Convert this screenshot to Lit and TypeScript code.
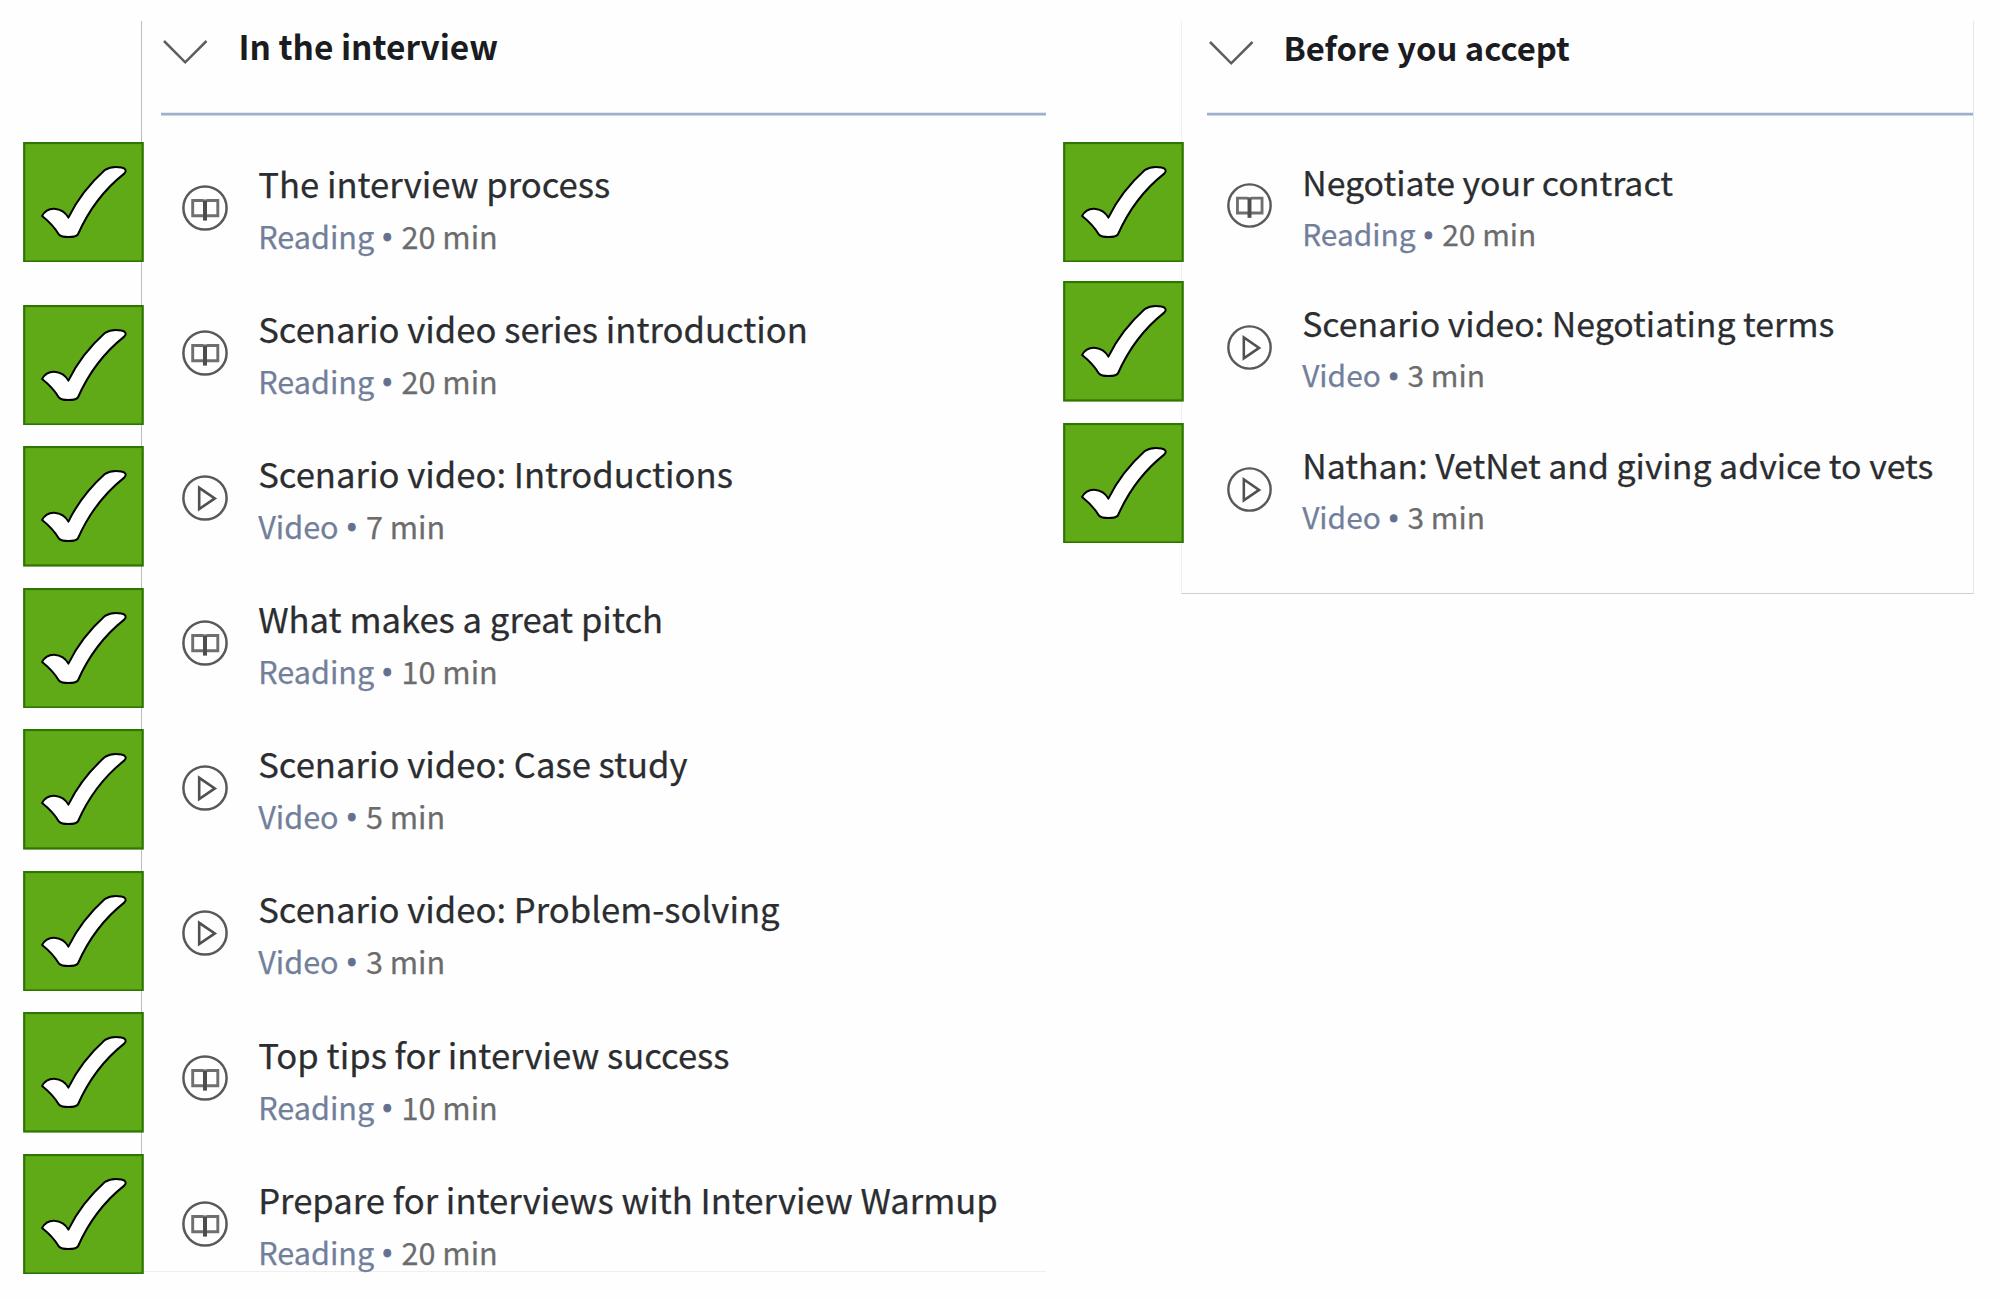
import { LitElement, html, svg, css } from "lit";
import { customElement, property } from "lit/decorators.js";
import { classMap } from "lit/directives/class-map.js";

type Kind = "Reading" | "Video";
interface Item {
  title: string;
  kind: Kind;
  minutes: number;
}

const INTERVIEW: Item[] = [
  { title: "The interview process", kind: "Reading", minutes: 20 },
  { title: "Scenario video series introduction", kind: "Reading", minutes: 20 },
  { title: "Scenario video: Introductions", kind: "Video", minutes: 7 },
  { title: "What makes a great pitch", kind: "Reading", minutes: 10 },
  { title: "Scenario video: Case study", kind: "Video", minutes: 5 },
  { title: "Scenario video: Problem-solving", kind: "Video", minutes: 3 },
  { title: "Top tips for interview success", kind: "Reading", minutes: 10 },
  { title: "Prepare for interviews with Interview Warmup", kind: "Reading", minutes: 20 },
];

const ACCEPT: Item[] = [
  { title: "Negotiate your contract", kind: "Reading", minutes: 20 },
  { title: "Scenario video: Negotiating terms", kind: "Video", minutes: 3 },
  { title: "Nathan: VetNet and giving advice to vets", kind: "Video", minutes: 3 },
];

@customElement("done-badge")
export class DoneBadge extends LitElement {
  static styles = css`
    :host {
      display: block;
      width: 120.5px;
      height: 120.5px;
    }
    svg {
      display: block;
      width: 100%;
      height: 100%;
    }
  `;
  render() {
    return html`<svg viewBox="0 0 120.5 120.5">
      <rect x="1.2" y="1" width="118.5" height="118.5" fill="#60a917" stroke="#2d7600" stroke-width="2.2" />
      <path
        transform="translate(0.9 0.3)"
        d="M18.2 73.700C21 68.200 25 66.300 30.200 66.400C37 67 42 70.500 44.500 75.300C53 58 65 42 81.200 27.500C86 24.500 92 24.200 97.500 25.200C102 26 103 28.500 100.300 31.300C80.500 47 65.500 66 54 92.200C51 95.600 38.200 95.600 35 92.200C31 85.500 25.500 79.500 18.200 73.700Z"
        fill="#fff" stroke="#000" stroke-width="2" stroke-linejoin="round"
      />
    </svg>`;
  }
}

@customElement("course-section")
export class CourseSection extends LitElement {
  @property() heading = "";
  @property({ type: Array }) items: Item[] = [];
  @property({ type: Boolean }) compact = false;

  static styles = css`
    .section {
      --title: 34.65px;
      --title-line: 52px;
      --meta: 30.6px;
      --meta-line: 46px;
      --meta-gap: 4px;
      --row: 145.15px;
      --icon: 48px;
      --icon-top: 48.6px;
      display: flex;
      align-items: flex-start;
      color: #1a1c1f;
      font-family: "Noto Sans CJK SC", "Noto Sans", sans-serif;
    }
    .section.compact {
      --title: 33.85px;
      --title-line: 50px;
      --meta: 29.9px;
      --meta-line: 44px;
      --meta-gap: 3.9px;
      --row: 141.8px;
      --icon: 47px;
      --icon-top: 47.3px;
    }
    .badges {
      display: flex;
      flex-direction: column;
      gap: 21px;
      padding-top: 120.7px;
      position: relative;
      z-index: 1;
    }
    .section:not(.compact) done-badge:first-child {
      margin-bottom: 21.5px;
    }
    .compact done-badge:first-child {
      margin-bottom: -2px;
    }
    .panel {
      box-sizing: border-box;
      width: 905px;
      height: 1251px;
      margin-left: -2.5px;
      padding-left: 19px;
      border-left: 1px solid #bdbdbd;
      border-bottom: 1px solid #efefef;
    }
    .compact .panel {
      width: 793px;
      height: 573px;
      padding-left: 25px;
      border-left-color: #f0f0f0;
      border-right: 1px solid #e6e6ea;
      border-bottom-color: #cfcfcf;
    }
    .head {
      display: flex;
      align-items: flex-start;
      height: 91px;
    }
    .chevron {
      flex: none;
      width: 48px;
      height: 48px;
      margin-top: 7px;
    }
    .heading {
      margin: 0 0 0 29.2px;
      font-size: 33.45px;
      font-weight: 700;
      line-height: 50px;
      white-space: nowrap;
    }
    .compact .chevron {
      margin-top: 8px;
    }
    .compact .heading {
      margin-left: 28.2px;
      padding-top: 1px;
      font-size: 32.8px;
    }
    .rule {
      height: 4px;
      background: linear-gradient(#e3e8f1 0 1px, #9fb0cc 1px 3px, #ccd5e4 3px 4px);
    }
    .list {
      margin: 0;
      padding: 19px 0 0;
      list-style: none;
    }
    .row {
      display: flex;
      align-items: flex-start;
      height: var(--row);
    }
    .icon {
      flex: none;
      width: var(--icon);
      height: var(--icon);
      margin: var(--icon-top) 29.2px 0 19.8px;
    }
    .compact .icon {
      margin-right: 29px;
      margin-left: 19px;
    }
    .text {
      padding-top: 21.7px;
      white-space: nowrap;
      -webkit-text-stroke: 0.25px currentColor;
    }
    .title {
      font-size: var(--title);
      line-height: var(--title-line);
      color: #2b2d30;
    }
    .meta {
      margin-top: var(--meta-gap);
      font-size: var(--meta);
      line-height: var(--meta-line);
      color: #6c6c6c;
    }
    .kind {
      color: #727f9b;
    }
    .dot {
      margin: 0 1.5px 0 0.5px;
      font-family: "Noto Sans", sans-serif;
      line-height: 0;
      color: #64708e;
      -webkit-text-stroke: 1px currentColor;
    }
  `;

  private icon(kind: Kind) {
    const glyph =
      kind === "Reading"
        ? svg`<path d="M-12.300 -7.500H-3Q0 -7.500 0 -5.500Q0 -7.500 3 -7.500H12.800V7.700H3Q0 7.700 0 9Q0 7.700 -3 7.700H-12.300Z" fill="none" stroke="#6f6f6f" stroke-width="2.900"/>
            <path d="M0 -7V12.600" stroke="#4d4d4d" stroke-width="4"/>`
        : svg`<path d="M-5.800 -10.200V11L9.800 .4Z" fill="none" stroke="#505050" stroke-width="2.600"/>`;
    return html`<svg class="icon" viewBox="-24 -24 48 48">
      <circle r="21.6" fill="none" stroke="#595959" stroke-width="2.500" />
      ${glyph}
    </svg>`;
  }

  render() {
    return html`<section class=${classMap({ section: true, compact: this.compact })}>
      <div class="badges">${this.items.map(() => html`<done-badge></done-badge>`)}</div>
      <div class="panel">
        <header class="head">
          <svg class="chevron" viewBox="0 0 48 48">
            <path d="M3 13L24.200 34.300L45.500 13" fill="none" stroke="#5e5e5e" stroke-width="2.500" />
          </svg>
          <h2 class="heading">${this.heading}</h2>
        </header>
        <div class="rule"></div>
        <ul class="list">
          ${this.items.map(
            (i) => html`<li class="row">
              ${this.icon(i.kind)}
              <div class="text">
                <div class="title">${i.title}</div>
                <div class="meta"><span class="kind">${i.kind}</span> <span class="dot">•</span> <span>${i.minutes} min</span></div>
              </div>
            </li>`
          )}
        </ul>
      </div>
    </section>`;
  }
}

@customElement("app-root")
export class AppRoot extends LitElement {
  static styles = css`
    :host {
      display: block;
      box-sizing: border-box;
      height: 1300px;
      overflow: hidden;
      background: #fefefe;
    }
    .page {
      display: flex;
      align-items: flex-start;
      gap: 17px;
      padding: 21px 0 0 23.2px;
    }
  `;
  render() {
    return html`<main class="page">
      <course-section heading="In the interview" .items=${INTERVIEW}></course-section>
      <course-section heading="Before you accept" .items=${ACCEPT} compact></course-section>
    </main>`;
  }
}
